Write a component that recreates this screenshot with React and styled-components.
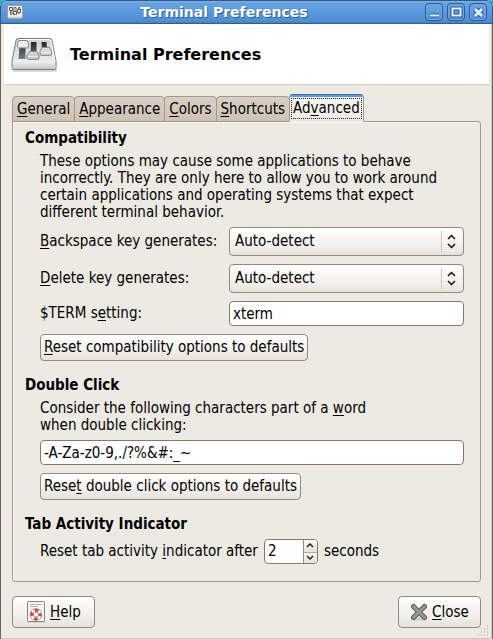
import React from "react";
import styled, { createGlobalStyle } from "styled-components";

const GlobalStyle = createGlobalStyle`
  * { box-sizing: border-box; }
  html { background: #00c8c8; }
  body {
    margin: 0;
    color: #000;
    font-family: "DejaVu Sans Condensed", "DejaVu Sans", sans-serif;
    font-size: 15px;
    line-height: 17px;
  }
  button, input, select { font: inherit; color: inherit; margin: 0; }
  u { text-underline-offset: 2px; text-decoration-thickness: 1px; text-decoration-skip-ink: none; }
`;

const Window = styled.main`
  display: flex;
  flex-direction: column;
  overflow: hidden;
  border-radius: 6px 6px 0 0;
  background: #edeae3;
`;

const TitleBar = styled.header`
  display: flex;
  align-items: center;
  gap: 4px;
  height: 24px;
  padding: 0 5px 0 6px;
  border: 1px solid #35597f;
  border-bottom-color: #33618f;
  border-radius: 6px 6px 0 0;
  background: linear-gradient(#7db3ea, #65a2e2 2px, #4b8dd2);
  box-shadow: inset 0 -1px #4381c3;
`;

const Caption = styled.h1`
  flex: 1;
  margin: 0;
  color: #fff;
  font-family: "DejaVu Sans", sans-serif;
  font-size: 14px;
  line-height: 20px;
  text-align: center;
  text-shadow: 1px 1px #2f6096;
`;

const WindowButton = styled.button`
  display: flex;
  width: 18px;
  height: 18px;
  padding: 0;
  border: 1px solid #2c5c91;
  border-radius: 4px;
  background: linear-gradient(#6ba6e4, #4e90d5);
  box-shadow: inset 0 0 0 1px #6ca5e1;
`;

const Frame = styled.div`
  padding: 0 3px 2px;
  border: solid #6c6359;
  border-width: 0 1px 1px;
  box-shadow: inset 0 -1px #d3c9bb, inset -1px 0 #d3c9bb;
`;

const Banner = styled.div`
  display: flex;
  align-items: center;
  gap: 12px;
  height: 61px;
  padding: 1px 7px 0;
  border-bottom: 1px solid #d8cdbf;
  background: #fff;
`;

const BannerTitle = styled.h2`
  margin: 0;
  font-family: "DejaVu Sans", sans-serif;
  font-size: 16px;
  line-height: 20px;
`;

const Notebook = styled.section`
  padding: 9px 8px 0;
`;

const TabList = styled.div`
  display: flex;
  align-items: flex-end;
  height: 28px;
  margin-bottom: -1px;
`;

const Tab = styled.button`
  position: relative;
  height: ${(p) => (p.$active ? 28 : 26)}px;
  padding: ${(p) => (p.$active ? "1px 1px 0" : "1px 4px 0")};
  margin-left: ${(p) => (p.$first ? 0 : -1)}px;
  border: 1px solid #a69884;
  border-bottom-color: ${(p) => (p.$active ? "#edeae3" : "#a69884")};
  border-radius: 4px 4px 0 0;
  background: ${(p) => (p.$active ? "linear-gradient(#5c9ee0 2px, #f8f7f4 2px, #edeae3)" : "linear-gradient(#d9d0c5, #cdc3b5)")};
  ${(p) => p.$active && "border-top-color: #3b6ea5;"}
  white-space: nowrap;
`;

const FocusRing = styled.span`
  display: block;
  padding: 1px;
  border: 1px dotted #222;
`;

const Panel = styled.div`
  padding: 8px 16px 17px 12px;
  border: 1px solid #a69884;
  border-radius: 0 3px 3px 3px;
  box-shadow: inset 1px 1px #f8f6f2;
`;

const Group = styled.section`
  & + & { margin-top: 16px; }
`;

const GroupTitle = styled.h3`
  margin: 0 0 6px;
  font-size: 15px;
  line-height: 17px;
`;

const GroupBody = styled.div`
  display: flex;
  flex-direction: column;
  align-items: flex-start;
  gap: 8px;
  padding-left: 15px;
`;

const Note = styled.label`
  display: block;
  max-width: 420px;
  margin: 0 0 -2px;
`;

const Field = styled.div`
  display: grid;
  grid-template-columns: 181px 1fr;
  gap: 8px;
  align-items: center;
  width: 100%;
`;

const SelectBox = styled.div`
  position: relative;
  display: flex;
`;

const Select = styled.select`
  appearance: none;
  width: 100%;
  height: 29px;
  padding: 0 28px 0 5px;
  border: 1px solid #95897a;
  border-radius: 4px;
  background: linear-gradient(#fff, #f1eeea 75%, #e5e0d8);
`;

const SelectArrows = styled.svg`
  position: absolute;
  top: 3px;
  right: 3px;
  pointer-events: none;
`;

const TextInput = styled.input`
  width: 100%;
  height: 25px;
  padding: 0 3px;
  border: 1px solid #84796a;
  border-radius: 4px;
  background: #fff;
`;

const Button = styled.button`
  display: flex;
  align-items: center;
  justify-content: center;
  gap: 4px;
  min-width: ${(p) => (p.$wide ? 83 : 0)}px;
  height: ${(p) => (p.$wide ? 32 : 27)}px;
  padding: 0 3px;
  border: 1px solid #95897a;
  border-radius: 4px;
  background: linear-gradient(#fff, #f3f0ec 60%, #e6e1d9);
  white-space: nowrap;
`;

const Inline = styled.div`
  display: flex;
  align-items: center;
  gap: 6px;
`;

const Spinner = styled.div`
  display: flex;
  width: 54px;
  height: 25px;
  overflow: hidden;
  border: 1px solid #84796a;
  border-radius: 4px;
  background: #fff;
`;

const SpinInput = styled.input`
  flex: 1;
  min-width: 0;
  padding: 0 3px;
  border: 0;
  background: none;
`;

const Steps = styled.div`
  display: grid;
  grid-template-rows: 1fr 1fr;
  width: 14px;
  border-left: 1px solid #95897a;
`;

const Step = styled.button`
  display: flex;
  align-items: center;
  justify-content: center;
  padding: 0;
  border: 0;
  background: linear-gradient(#fbfaf8, #e6e1d9);
  & + & { border-top: 1px solid #b3a899; }
`;

const Footer = styled.footer`
  position: relative;
  display: flex;
  justify-content: space-between;
  padding: 14px 8px 9px;
`;

const Grip = styled.svg`
  position: absolute;
  right: 0;
  bottom: 0;
`;

function AppIcon() {
  return (
    <svg width="16" height="16" viewBox="0 0 16 16" aria-hidden="true">
      <rect x="0.5" y="1.5" width="15" height="13" rx="1.5" fill="#f6f5f3" stroke="#a19c94" />
      <path d="M1 12.500h14v1.500H1z" fill="#d9d7d3" />
      <path d="M3.500 6v4.500h1.500V6M7 7V3.500h2V7M11.500 6V3.500H13V6M12 9v1.500" fill="none" stroke="#444" strokeWidth="0.800" />
      <g fill="#f0f0ee" stroke="#444" strokeWidth="0.900">
        <path d="M2.500 3.500h3v3h-3zM6.500 7.500h3v3h-3zM10.500 5.500h3v3h-3z" />
      </g>
    </svg>
  );
}

function MixerIcon() {
  return (
    <svg width="47" height="36" viewBox="0 0 47 36" aria-hidden="true">
      <defs>
        <linearGradient id="mixerTop" x2="0" y2="1">
          <stop offset="0" stopColor="#d2d2d2" />
          <stop offset="1" stopColor="#f4f4f4" />
        </linearGradient>
        <linearGradient id="mixerFront" x2="0" y2="1">
          <stop offset="0" stopColor="#f1f1f1" />
          <stop offset="1" stopColor="#c7c7c7" />
        </linearGradient>
        <linearGradient id="slot" x2="0" y2="1">
          <stop offset="0" stopColor="#222627" />
          <stop offset="1" stopColor="#6c8288" />
        </linearGradient>
        <linearGradient id="knob" x2="0" y2="1">
          <stop offset="0" stopColor="#f2f2ef" />
          <stop offset="1" stopColor="#c4c4bf" />
        </linearGradient>
      </defs>
      <rect x="1" y="31" width="45" height="4" rx="2" fill="#000" opacity=".14" />
      <path d="M7.500 1.500h31q2 0 2.500 2l4 20.500v6.500q0 2-2 2h-40q-2 0-2-2V24L5 3.500q.500-2 2.500-2z" fill="url(#mixerTop)" stroke="#777" />
      <path d="M2 25.500q1-1.500 3-1.500h36q2 0 3 1.500v4.500q0 2-2 2H4q-2 0-2-2z" fill="url(#mixerFront)" />
      <path d="M8 2.500h30q1.500 0 2 1.500l4 20" fill="none" stroke="#fff" />
      <path d="M8.500 10h6v12H7.500zM20 5h5.500v12h-6zM30.500 5h5l1 12h-5.500z" fill="url(#slot)" />
      <g fill="url(#knob)" stroke="#888a85">
        <path d="M8 3.500h8l1.500 3v3q0 1.500-1.500 1.500H8Q6.500 11 6.500 9.500v-3zM18.500 14.500h7.500l2 4v2.500q0 1.500-1.500 1.500h-9q-1.500 0-1.500-1.500V18.500zM31 10.500h7.500l2 4v2.500q0 1.500-1.500 1.500h-8.500q-1.500 0-1.500-1.500V14.500z" />
      </g>
      <path d="M7 8h10M17 19.500h10M30 15.500h10" stroke="#fff" opacity=".6" />
    </svg>
  );
}

function HelpIcon() {
  return (
    <svg width="20" height="22" viewBox="0 0 20 22" aria-hidden="true">
      <path d="M1 19.500h18v2H1z" fill="#000" opacity=".15" />
      <rect x="1.500" y="0.500" width="17" height="20" rx="1" fill="#f5f5f3" stroke="#83857f" />
      <path d="M4 3.500h12M4 5.500h8" stroke="#b6b6b2" />
      <circle cx="10" cy="13.500" r="4.200" fill="none" stroke="#8d8d8d" strokeWidth="4" />
      <circle cx="10" cy="13.500" r="4.200" fill="none" stroke="#fff" strokeWidth="2.600" />
      <circle cx="10" cy="13.500" r="4.200" fill="none" stroke="#d8423f" strokeWidth="3" strokeDasharray="3.600 3" strokeDashoffset="1.800" />
    </svg>
  );
}

function CloseIcon() {
  return (
    <svg width="18" height="18" viewBox="0 0 18 18" aria-hidden="true">
      <ellipse cx="9" cy="16" rx="8" ry="1.800" fill="#000" opacity=".13" />
      <path d="M3.500 3.500l11 11M14.500 3.500l-11 11" stroke="#5c5e5a" strokeWidth="5" strokeLinecap="round" />
      <path d="M3.500 3.500l11 11M14.500 3.500l-11 11" stroke="#969894" strokeWidth="3" strokeLinecap="round" />
    </svg>
  );
}

function Chevron({ up }) {
  return (
    <svg width="8" height="5" viewBox="0 0 8 5" aria-hidden="true">
      <path d={up ? "M1 4l3-3 3 3" : "M1 1l3 3 3-3"} fill="none" stroke="#222" strokeWidth="1.500" />
    </svg>
  );
}

function AutoSelect({ id }) {
  return (
    <SelectBox>
      <Select id={id} defaultValue="auto">
        <option value="auto">Auto-detect</option>
      </Select>
      <SelectArrows width="20" height="23" viewBox="0 0 20 23" aria-hidden="true">
        <path d="M0.500 1v21" stroke="#cfc7ba" />
        <path d="M7 9l3.500-3.500L14 9M7 14l3.500 3.500L14 14" fill="none" stroke="#111" strokeWidth="1.500" />
      </SelectArrows>
    </SelectBox>
  );
}

const windowActions = [
  ["Minimize", "M4 11.500h9", 2],
  ["Maximize", "M4.500 4.500h8v7h-8z", 2],
  ["Close window", "M5 5l7 7M12 5l-7 7", 3],
];

export default function App() {
  return (
    <>
      <GlobalStyle />
      <Window>
        <TitleBar>
          <AppIcon />
          <Caption>Terminal Preferences</Caption>
          {windowActions.map(([label, d, weight]) => (
            <WindowButton key={label} aria-label={label}>
              <svg width="16" height="16" viewBox="0 0 16 16" aria-hidden="true">
                <path d={d} fill="none" stroke="#2c5c91" strokeWidth={weight + 2} />
                <path d={d} fill="none" stroke="#e3eefa" strokeWidth={weight} />
              </svg>
            </WindowButton>
          ))}
        </TitleBar>
        <Frame>
          <Banner>
            <MixerIcon />
            <BannerTitle>Terminal Preferences</BannerTitle>
          </Banner>
          <Notebook>
            <TabList role="tablist">
              <Tab role="tab" $first><u>G</u>eneral</Tab>
              <Tab role="tab"><u>A</u>ppearance</Tab>
              <Tab role="tab"><u>C</u>olors</Tab>
              <Tab role="tab"><u>S</u>hortcuts</Tab>
              <Tab role="tab" aria-selected="true" $active>
                <FocusRing>Ad<u>v</u>anced</FocusRing>
              </Tab>
            </TabList>
            <Panel role="tabpanel">
              <Group>
                <GroupTitle>Compatibility</GroupTitle>
                <GroupBody>
                  <Note as="p">
                    These options may cause some applications to behave incorrectly. They are only here to allow you to work around certain applications and operating systems that expect different terminal behavior.
                  </Note>
                  <Field>
                    <label htmlFor="backspace"><u>B</u>ackspace key generates:</label>
                    <AutoSelect id="backspace" />
                  </Field>
                  <Field>
                    <label htmlFor="delete"><u>D</u>elete key generates:</label>
                    <AutoSelect id="delete" />
                  </Field>
                  <Field>
                    <label htmlFor="term">$TERM s<u>e</u>tting:</label>
                    <TextInput id="term" defaultValue="xterm" />
                  </Field>
                  <Button><span><u>R</u>eset compatibility options to defaults</span></Button>
                </GroupBody>
              </Group>
              <Group>
                <GroupTitle>Double Click</GroupTitle>
                <GroupBody>
                  <Note htmlFor="word">
                    Consider the following characters part of a <u>w</u>ord
                    <br />
                    when double clicking:
                  </Note>
                  <TextInput id="word" defaultValue="-A-Za-z0-9,./?%&#:_~" />
                  <Button><span>Rese<u>t</u> double click options to defaults</span></Button>
                </GroupBody>
              </Group>
              <Group>
                <GroupTitle>Tab Activity Indicator</GroupTitle>
                <GroupBody>
                  <Inline>
                    <label htmlFor="timeout">Reset tab activity <u>i</u>ndicator after</label>
                    <Spinner>
                      <SpinInput id="timeout" defaultValue="2" />
                      <Steps>
                        <Step aria-label="Increase"><Chevron up /></Step>
                        <Step aria-label="Decrease"><Chevron /></Step>
                      </Steps>
                    </Spinner>
                    <span>seconds</span>
                  </Inline>
                </GroupBody>
              </Group>
            </Panel>
          </Notebook>
          <Footer>
            <Button $wide><HelpIcon /><span><u>H</u>elp</span></Button>
            <Button $wide><CloseIcon /><span><u>C</u>lose</span></Button>
            <Grip width="12" height="12" viewBox="0 0 12 12" aria-hidden="true">
              <path d="M10 1h1M7 4h4M4 7h7M1 10h10" stroke="#b5aa9b" strokeDasharray="1 2" />
            </Grip>
          </Footer>
        </Frame>
      </Window>
    </>
  );
}
